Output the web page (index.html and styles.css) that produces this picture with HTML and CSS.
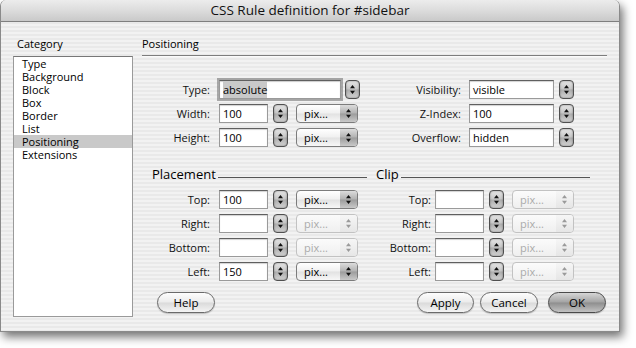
FILE: index.html
```html
<!DOCTYPE html>
<html>
<head>
<meta charset="utf-8">
<link rel="stylesheet" href="styles.css">
</head>
<body>
<div class="window">
  <div class="titlebar">CSS Rule definition for #sidebar</div>
  <div class="content">
    <div class="cat-col">
      <div class="cat-label">Category</div>
      <ul class="cat-list">
        <li>Type</li>
        <li>Background</li>
        <li>Block</li>
        <li>Box</li>
        <li>Border</li>
        <li>List</li>
        <li class="sel">Positioning</li>
        <li>Extensions</li>
      </ul>
    </div>
    <div class="panel">
      <div class="panel-head">Positioning</div>
      <div class="top-fields">
        <div class="grp grp-a">
          <div class="row">
            <span class="lbl">Type:</span>
            <span class="field f-type focus"><span class="seltext">absolute</span></span>
            <span class="stepper s-type"><svg width="7" height="11" viewBox="0 0 7 11"><path d="M3.5 1L6 4.2H1Z M3.5 10L6 6.8H1Z"/></svg></span>
          </div>
          <div class="row">
            <span class="lbl">Width:</span>
            <span class="field f-num">100</span>
            <span class="stepper"><svg width="7" height="11" viewBox="0 0 7 11"><path d="M3.5 1L6 4.2H1Z M3.5 10L6 6.8H1Z"/></svg></span>
            <span class="popup"><span class="pv">pix...</span><span class="parrows"><svg width="7" height="11" viewBox="0 0 7 11"><path d="M3.5 1L6 4.2H1Z M3.5 10L6 6.8H1Z"/></svg></span></span>
          </div>
          <div class="row">
            <span class="lbl">Height:</span>
            <span class="field f-num">100</span>
            <span class="stepper"><svg width="7" height="11" viewBox="0 0 7 11"><path d="M3.5 1L6 4.2H1Z M3.5 10L6 6.8H1Z"/></svg></span>
            <span class="popup"><span class="pv">pix...</span><span class="parrows"><svg width="7" height="11" viewBox="0 0 7 11"><path d="M3.5 1L6 4.2H1Z M3.5 10L6 6.8H1Z"/></svg></span></span>
          </div>
        </div>
        <div class="grp grp-b">
          <div class="row">
            <span class="lbl">Visibility:</span>
            <span class="field f-wide">visible</span>
            <span class="stepper"><svg width="7" height="11" viewBox="0 0 7 11"><path d="M3.5 1L6 4.2H1Z M3.5 10L6 6.8H1Z"/></svg></span>
          </div>
          <div class="row">
            <span class="lbl">Z-Index:</span>
            <span class="field f-wide">100</span>
            <span class="stepper"><svg width="7" height="11" viewBox="0 0 7 11"><path d="M3.5 1L6 4.2H1Z M3.5 10L6 6.8H1Z"/></svg></span>
          </div>
          <div class="row">
            <span class="lbl">Overflow:</span>
            <span class="field f-wide">hidden</span>
            <span class="stepper"><svg width="7" height="11" viewBox="0 0 7 11"><path d="M3.5 1L6 4.2H1Z M3.5 10L6 6.8H1Z"/></svg></span>
          </div>
        </div>
      </div>

      <div class="sections">
        <div class="sec sec-place">
          <div class="sec-head"><span class="sec-title">Placement</span><span class="rule"></span></div>
          <div class="sec-rows">
            <div class="row">
              <span class="lbl">Top:</span>
              <span class="field f-num">100</span>
              <span class="stepper"><svg width="7" height="11" viewBox="0 0 7 11"><path d="M3.5 1L6 4.2H1Z M3.5 10L6 6.8H1Z"/></svg></span>
              <span class="popup"><span class="pv">pix...</span><span class="parrows"><svg width="7" height="11" viewBox="0 0 7 11"><path d="M3.5 1L6 4.2H1Z M3.5 10L6 6.8H1Z"/></svg></span></span>
            </div>
            <div class="row">
              <span class="lbl">Right:</span>
              <span class="field f-num"></span>
              <span class="stepper"><svg width="7" height="11" viewBox="0 0 7 11"><path d="M3.5 1L6 4.2H1Z M3.5 10L6 6.8H1Z"/></svg></span>
              <span class="popup disabled"><span class="pv">pix...</span><span class="parrows"><svg width="7" height="11" viewBox="0 0 7 11"><path d="M3.5 1L6 4.2H1Z M3.5 10L6 6.8H1Z"/></svg></span></span>
            </div>
            <div class="row">
              <span class="lbl">Bottom:</span>
              <span class="field f-num"></span>
              <span class="stepper"><svg width="7" height="11" viewBox="0 0 7 11"><path d="M3.5 1L6 4.2H1Z M3.5 10L6 6.8H1Z"/></svg></span>
              <span class="popup disabled"><span class="pv">pix...</span><span class="parrows"><svg width="7" height="11" viewBox="0 0 7 11"><path d="M3.5 1L6 4.2H1Z M3.5 10L6 6.8H1Z"/></svg></span></span>
            </div>
            <div class="row">
              <span class="lbl">Left:</span>
              <span class="field f-num">150</span>
              <span class="stepper"><svg width="7" height="11" viewBox="0 0 7 11"><path d="M3.5 1L6 4.2H1Z M3.5 10L6 6.8H1Z"/></svg></span>
              <span class="popup"><span class="pv">pix...</span><span class="parrows"><svg width="7" height="11" viewBox="0 0 7 11"><path d="M3.5 1L6 4.2H1Z M3.5 10L6 6.8H1Z"/></svg></span></span>
            </div>
          </div>
        </div>
        <div class="sec sec-clip">
          <div class="sec-head"><span class="sec-title">Clip</span><span class="rule"></span></div>
          <div class="sec-rows">
            <div class="row">
              <span class="lbl">Top:</span>
              <span class="field f-num"></span>
              <span class="stepper"><svg width="7" height="11" viewBox="0 0 7 11"><path d="M3.5 1L6 4.2H1Z M3.5 10L6 6.8H1Z"/></svg></span>
              <span class="popup disabled"><span class="pv">pix...</span><span class="parrows"><svg width="7" height="11" viewBox="0 0 7 11"><path d="M3.5 1L6 4.2H1Z M3.5 10L6 6.8H1Z"/></svg></span></span>
            </div>
            <div class="row">
              <span class="lbl">Right:</span>
              <span class="field f-num"></span>
              <span class="stepper"><svg width="7" height="11" viewBox="0 0 7 11"><path d="M3.5 1L6 4.2H1Z M3.5 10L6 6.8H1Z"/></svg></span>
              <span class="popup disabled"><span class="pv">pix...</span><span class="parrows"><svg width="7" height="11" viewBox="0 0 7 11"><path d="M3.5 1L6 4.2H1Z M3.5 10L6 6.8H1Z"/></svg></span></span>
            </div>
            <div class="row">
              <span class="lbl">Bottom:</span>
              <span class="field f-num"></span>
              <span class="stepper"><svg width="7" height="11" viewBox="0 0 7 11"><path d="M3.5 1L6 4.2H1Z M3.5 10L6 6.8H1Z"/></svg></span>
              <span class="popup disabled"><span class="pv">pix...</span><span class="parrows"><svg width="7" height="11" viewBox="0 0 7 11"><path d="M3.5 1L6 4.2H1Z M3.5 10L6 6.8H1Z"/></svg></span></span>
            </div>
            <div class="row">
              <span class="lbl">Left:</span>
              <span class="field f-num"></span>
              <span class="stepper"><svg width="7" height="11" viewBox="0 0 7 11"><path d="M3.5 1L6 4.2H1Z M3.5 10L6 6.8H1Z"/></svg></span>
              <span class="popup disabled"><span class="pv">pix...</span><span class="parrows"><svg width="7" height="11" viewBox="0 0 7 11"><path d="M3.5 1L6 4.2H1Z M3.5 10L6 6.8H1Z"/></svg></span></span>
            </div>
          </div>
        </div>
      </div>

      <div class="buttons">
        <span class="btn b-help">Help</span>
        <span class="spacer"></span>
        <span class="btn b-apply">Apply</span>
        <span class="btn b-cancel">Cancel</span>
        <span class="btn b-ok">OK</span>
      </div>
    </div>
  </div>
</div>
</body>
</html>
```
FILE: styles.css
```css
* { box-sizing: border-box; }
html, body { margin: 0; padding: 0; background: #ffffff; }
body {
  width: 636px; height: 348px; overflow: hidden;
  font-family: "Open Sans", "Noto Sans", sans-serif;
  font-size: 11px; color: #000;
}
.window {
  width: 620px; height: 332px;
  border: 1px solid #8a8a8a; border-top: none;
  border-radius: 6px 6px 0 0;
  box-shadow: 3px 5px 10px rgba(0,0,0,0.55);
  background: repeating-linear-gradient(to bottom, #f2f2f2 0 2px, #e9e9e9 2px 4px);
  display: flex; flex-direction: column;
}
.titlebar {
  height: 22px;
  border-bottom: 1px solid #7f7f7f;
  border-radius: 6px 6px 0 0;
  background: linear-gradient(to bottom, #ececec 0%, #dcdcdc 50%, #c9c9c9 100%);
  text-align: center;
  font-size: 13.5px; line-height: 21px; color: #111;
}
.content { display: flex; flex: 1; padding-top: 15px; }
.cat-col { margin-left: 12px; width: 120px; display: flex; flex-direction: column; }
.cat-label { line-height: 13px; height: 13px; padding-left: 4px; margin-bottom: 6px; }
.cat-list {
  list-style: none; margin: 0; padding: 0;
  height: 261px; background: #fff;
  border: 1px solid #9a9a9a; border-top-color: #777;
}
.cat-list li { line-height: 13px; height: 13px; padding-left: 8px; }
.cat-list li.sel { background: #c9c9c9; }

.panel { margin-left: 9px; width: 465px; display: flex; flex-direction: column; }
.panel-head { line-height: 13px; padding-bottom: 5px; border-bottom: 1px solid #7d7d7d; box-shadow: 0 1px 0 #fafafa; }

.top-fields { display: flex; margin-top: 24px; }
.grp { display: flex; flex-direction: column; gap: 5px; }
.grp-a { width: 238px; }
.row { display: flex; align-items: center; height: 19px; }
.lbl { text-align: right; flex: none; color: #111; }
.grp-a .lbl { width: 68px; margin-right: 9px; }
.grp-b .lbl { width: 81px; margin-right: 8px; }

.field {
  flex: none; height: 19px;
  background: #fff;
  border: 1px solid #9a9a9a; border-top-color: #5f5f5f;
  box-shadow: inset 0 1px 1px rgba(0,0,0,0.18);
  padding-left: 3px; line-height: 17px; font-size: 11px;
}
.f-num { width: 49px; }
.f-type { width: 122px; }
.f-wide { width: 85px; }
.field.focus { box-shadow: 0 0 0 2px rgba(110,110,110,0.55), inset 0 1px 1px rgba(0,0,0,0.2); }
.seltext { background: #c9c9c9; padding: 1px 0; }

.stepper {
  flex: none; width: 15px; height: 19px; margin-left: 5px;
  border: 1px solid #4f4f4f; border-radius: 4px;
  background: linear-gradient(to bottom, #e6e6e6 0%, #c6c6c6 48%, #adadad 52%, #d2d2d2 100%);
  box-shadow: inset 0 0 2px rgba(0,0,0,0.45);
  display: flex; align-items: center; justify-content: center;
}
.stepper svg path { fill: #111; }
.s-type { margin-left: 4px; }

.popup {
  flex: none; width: 62px; height: 19px; margin-left: 8px;
  border: 1px solid #7c7c7c; border-radius: 4px;
  background: linear-gradient(to bottom, #ffffff 0%, #f0f0f0 48%, #e2e2e2 52%, #f7f7f7 100%);
  display: flex; overflow: hidden;
}
.pv { flex: 1; padding-left: 7px; line-height: 17px; }
.parrows {
  width: 17px; flex: none;
  background: linear-gradient(to bottom, #dcdcdc 0%, #b2b2b2 48%, #9c9c9c 52%, #c9c9c9 100%);
  display: flex; align-items: center; justify-content: center;
}
.parrows svg path { fill: #111; }
.popup.disabled { border-color: #c2c2c2; background: linear-gradient(to bottom, #fbfbfb, #efefef); }
.popup.disabled .pv { color: #ababab; }
.popup.disabled .parrows { background: linear-gradient(to bottom, #f6f6f6, #e6e6e6); }
.popup.disabled .parrows svg path { fill: #9a9a9a; }

.sections { display: flex; margin-top: 21px; }
.sec-place { margin-left: 10px; width: 216px; }
.sec-clip { margin-left: 8px; width: 214px; }
.sec-head { display: flex; align-items: flex-end; height: 13px; }
.sec-title { font-size: 13px; line-height: 13px; flex: none; }
.rule { flex: 1; border-bottom: 1px solid #555; margin-bottom: 3px; margin-left: 2px; }
.sec-place .rule { margin-right: 1px; }
.sec-rows { display: flex; flex-direction: column; gap: 5px; margin-top: 9px; }
.sec-place .lbl { width: 58px; margin-right: 9px; }
.sec-clip .lbl { width: 55px; margin-right: 4px; }

.buttons { display: flex; margin-top: 11px; height: 21px; }
.spacer { flex: 1; }
.btn {
  flex: none; height: 21px; line-height: 19px; text-align: center;
  border: 1px solid #6a6a6a; border-radius: 11px;
  background: linear-gradient(to bottom, #fdfdfd 0%, #ececec 48%, #dadada 52%, #f4f4f4 100%);
  box-shadow: 0 1px 1px rgba(0,0,0,0.2);
  font-size: 11.5px;
}
.b-help { width: 58px; margin-left: 15px; }
.b-apply { width: 57px; margin-right: 6px; }
.b-cancel { width: 58px; margin-right: 10px; }
.b-ok {
  width: 58px; margin-right: 1px;
  border-color: #4a4a4a;
  background: linear-gradient(to bottom, #d6d6d6 0%, #a4a4a4 48%, #8e8e8e 52%, #c2c2c2 100%);
}
```
